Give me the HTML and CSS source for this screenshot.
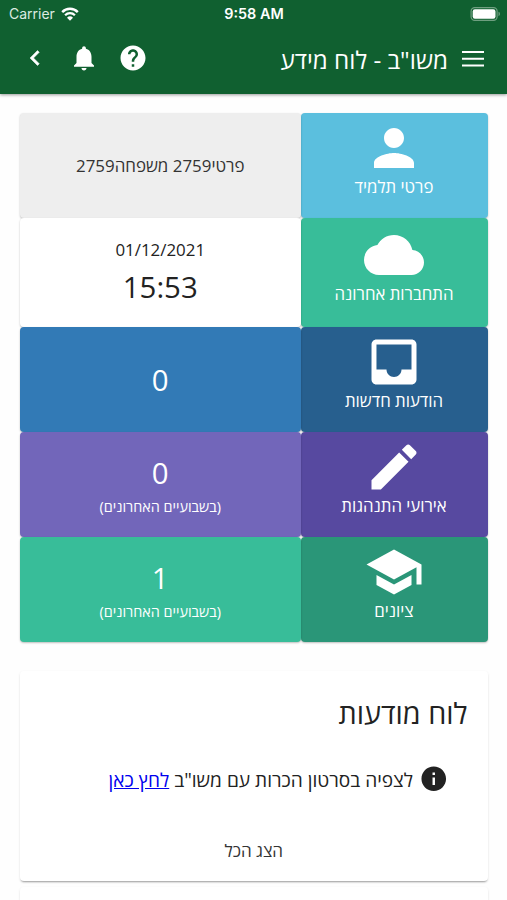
FILE: index.html
```
<!DOCTYPE html>
<html lang="he" dir="rtl">
<head>
    <meta charset="UTF-8">
    <meta name="viewport" content="width=device-width, initial-scale=1.0">
    <title>משו"ב - לוח מידע</title>
    <link rel="stylesheet" href="styles.css">
</head>
<body>
    <header class="header">
        <div class="statusBar" dir="ltr">
            <div class="carrier">
                <span>Carrier</span>
                <svg class="wifi" viewBox="0 0 18 14">
                    <path d="M1.2 5.1a11 11 0 0 1 15.6 0" fill="none" stroke="#fff" stroke-width="2.5"/>
                    <path d="M4.1 8.2a7 7 0 0 1 9.8 0" fill="none" stroke="#fff" stroke-width="2.3"/>
                    <path d="M9 13.7L6 10.7a4.3 4.3 0 0 1 6 0z" fill="#fff"/>
                </svg>
            </div>
            <div class="clock">9:58 AM</div>
            <svg class="battery" viewBox="0 0 30 14">
                <rect x=".6" y=".6" width="26" height="12.8" rx="3.6" fill="none" stroke="#6f9f80" stroke-width="1.2"/>
                <rect x="2.2" y="2.2" width="22.8" height="9.6" rx="2.2" fill="#fff"/>
                <path d="M28 4.8c1.9.6 1.9 3.8 0 4.4z" fill="#6f9f80"/>
            </svg>
        </div>
        <div class="toolbar">
            <svg class="menuIcon" viewBox="0 0 24 24"><path d="M1 4h22v2.1H1zM1 10.7h22v2.1H1zM1 17.4h22v2.1H1z"/></svg>
            <h1 class="title">משו"ב - לוח מידע</h1>
            <div class="actions">
                <svg class="icon" viewBox="0 0 24 24"><path d="M12 2C6.48 2 2 6.48 2 12s4.48 10 10 10 10-4.48 10-10S17.52 2 12 2zm1 17h-2v-2h2v2zm2.07-7.75l-.9.92C13.45 12.9 13 13.5 13 15h-2v-.5c0-1.1.45-2.1 1.17-2.83l1.24-1.26c.37-.36.59-.86.59-1.41 0-1.1-.9-2-2-2s-2 .9-2 2H8c0-2.21 1.79-4 4-4s4 1.79 4 4c0 .88-.36 1.68-.93 2.25z"/></svg>
                <svg class="icon" viewBox="0 0 24 24"><path d="M12 22c1.1 0 2-.9 2-2h-4c0 1.1.89 2 2 2zm6-6v-5c0-3.07-1.64-5.64-4.5-6.32V4c0-.83-.67-1.5-1.5-1.5s-1.5.67-1.5 1.5v.68C7.63 5.36 6 7.92 6 11v5l-2 2v1h16v-1l-2-2z"/></svg>
                <svg class="icon back" viewBox="0 0 24 24"><path d="M15.41 7.41L14 6l-6 6 6 6 1.41-1.41L10.83 12z"/></svg>
            </div>
        </div>
    </header>

    <main class="content">
        <div class="tiles">
            <div class="label cyan">
                <svg viewBox="0 0 24 24"><path d="M12 12c2.21 0 4-1.79 4-4s-1.79-4-4-4-4 1.79-4 4 1.79 4 4 4zm0 2c-2.67 0-8 1.34-8 4v2h16v-2c0-2.66-5.33-4-8-4z"/></svg>
                <span>פרטי תלמיד</span>
            </div>
            <div class="value gray">
                <div class="name">פרטי2759 משפחה2759</div>
            </div>

            <div class="label tall green">
                <svg viewBox="0 0 24 24"><path d="M19.35 10.04C18.67 6.59 15.64 4 12 4 9.11 4 6.6 5.64 5.35 8.04 2.34 8.36 0 10.91 0 14c0 3.31 2.69 6 6 6h13c2.76 0 5-2.24 5-5 0-2.64-2.05-4.78-4.65-4.96z"/></svg>
                <span>התחברות אחרונה</span>
            </div>
            <div class="value white">
                <div class="date">01/12/2021</div>
                <div class="number">15:53</div>
            </div>

            <div class="label darkBlue">
                <svg viewBox="0 0 24 24"><path d="M19 3H4.99c-1.11 0-1.98.89-1.98 2L3 19c0 1.1.88 2 1.99 2H19c1.1 0 2-.9 2-2V5c0-1.11-.9-2-2-2zm0 12h-4c0 1.66-1.35 3-3 3s-3-1.34-3-3H4.99V5H19v10z"/></svg>
                <span>הודעות חדשות</span>
            </div>
            <div class="value blue">
                <div class="number">0</div>
            </div>

            <div class="label darkPurple">
                <svg viewBox="0 0 24 24"><path d="M3 17.25V21h3.75L17.81 9.94l-3.75-3.75L3 17.25zM20.71 7.04c.39-.39.39-1.02 0-1.41l-2.34-2.34c-.39-.39-1.02-.39-1.41 0l-1.83 1.83 3.75 3.75 1.83-1.83z"/></svg>
                <span>אירועי התנהגות</span>
            </div>
            <div class="value purple">
                <div class="number">0</div>
                <div class="note">(בשבועיים האחרונים)</div>
            </div>

            <div class="label darkGreen">
                <svg viewBox="0 0 24 24"><path d="M5 13.18v4L12 21l7-3.82v-4L12 17l-7-3.82zM12 3L1 9l11 6 9-4.91V17h2V9L12 3z"/></svg>
                <span>ציונים</span>
            </div>
            <div class="value green">
                <div class="number">1</div>
                <div class="note">(בשבועיים האחרונים)</div>
            </div>
        </div>

        <section class="card">
            <h2 class="cardTitle">לוח מודעות</h2>
            <div class="message">
                <svg class="infoIcon" viewBox="0 0 24 24"><path d="M12 2C6.48 2 2 6.48 2 12s4.48 10 10 10 10-4.48 10-10S17.52 2 12 2zm1 15h-2v-6h2v6zm0-8h-2V7h2v2z"/></svg>
                <p>לצפיה בסרטון הכרות עם משו"ב <a href="#">לחץ כאן</a></p>
            </div>
            <button class="showAll">הצג הכל</button>
        </section>
        <section class="card nextCard"></section>
    </main>
</body>
</html>
```
FILE: styles.css
```
*{
    box-sizing: border-box;
}
body{
    margin: 0;
    font-family: "Open Sans", "Noto Sans", sans-serif;
    background-color: #fefefe;
    color: #222;
}
svg{
    display: block;
    flex-shrink: 0;
}
.header{
    height: 94px;
    background-color: #106030;
    color: white;
    box-shadow: 0 1px 3px rgba(0, 0, 0, 0.4);
}
.statusBar{
    height: 27px;
    padding: 0 6px 0 9px;
    display: grid;
    grid-template-columns: 1fr auto 1fr;
    align-items: center;
    font-family: Inter, sans-serif;
    font-size: 14px;
}
.carrier{
    display: flex;
    align-items: center;
    gap: 6px;
    color: #dcebe1;
}
.wifi{
    width: 18px;
    height: 14px;
}
.clock{
    font-weight: 600;
    font-size: 14.4px;
    margin-right: 2px;
}
.battery{
    width: 31px;
    height: 14px;
    justify-self: end;
}
.toolbar{
    height: 63px;
    padding: 0 22px 0 20px;
    display: flex;
    align-items: center;
}
.menuIcon{
    width: 24px;
    height: 24px;
    fill: white;
}
.title{
    margin: 2px 13px 0 0;
    font-size: 24.2px;
    font-weight: 400;
    white-space: nowrap;
}
.actions{
    margin-right: auto;
    margin-bottom: 1px;
    display: flex;
    gap: 19px;
}
.icon{
    width: 30px;
    height: 30px;
    fill: white;
}
.back{
    stroke: white;
    stroke-width: 0.4;
}
.content{
    padding: 19px 19.5px 0 20px;
}
.tiles{
    display: grid;
    grid-template-columns: 187px 280.5px;
    grid-template-rows: 105px 109px 105px 105px 105px;
}
.label, .value{
    display: flex;
    flex-direction: column;
    align-items: center;
    border-radius: 4px;
    box-shadow: 0 1px 2px rgba(0, 0, 0, 0.25);
    color: white;
}
.label{
    padding-top: 5px;
    font-size: 16.8px;
    line-height: 24px;
}
.label svg{
    width: 60px;
    height: 60px;
    margin-bottom: -3px;
    fill: white;
}
.tall{
    padding-top: 7px;
}
.value{
    justify-content: center;
}
.name, .date{
    font-size: 16.9px;
    line-height: 24px;
}
.date{
    margin-bottom: 4px;
}
.number{
    font-size: 29.4px;
    line-height: 42px;
}
.note{
    font-size: 14.4px;
    line-height: 26px;
}
.cyan{
    background-color: #5bbfde;
}
.green{
    background-color: #38bd99;
}
.darkBlue{
    background-color: #275f8e;
}
.blue{
    background-color: #327ab6;
}
.darkPurple{
    background-color: #5749a0;
}
.purple{
    background-color: #7266ba;
}
.darkGreen{
    background-color: #2a9678;
}
.gray{
    background-color: #eee;
    color: #333;
}
.white{
    background-color: white;
    color: #222;
}
.purple, .value.green{
    padding-top: 2px;
}
.card{
    height: 210px;
    margin-top: 29px;
    padding: 20px 20px 0;
    border-radius: 4px;
    background-color: white;
    box-shadow: 0 2px 2px -1px rgba(0, 0, 0, 0.35), 0 1px 3px rgba(0, 0, 0, 0.08);
}
.cardTitle{
    margin: 0;
    font-size: 28.8px;
    font-weight: 400;
    line-height: 44px;
}
.message{
    margin: 28px 19px 0 0;
    display: flex;
    align-items: center;
    gap: 6px;
    font-size: 19.1px;
    line-height: 30px;
}
.message p{
    margin: 2px 0 0;
    white-space: nowrap;
}
.message a{
    color: #0000ee;
}
.infoIcon{
    width: 29.5px;
    height: 29.5px;
    fill: #222;
}
.showAll{
    display: block;
    margin: 43px auto 0;
    padding: 0;
    border: none;
    background: none;
    font-family: inherit;
    font-size: 17px;
    line-height: 26px;
    color: #333;
    cursor: pointer;
}
.nextCard{
    height: 13px;
    margin-top: 6px;
    padding: 0;
    border-radius: 4px 4px 0 0;
}
```
